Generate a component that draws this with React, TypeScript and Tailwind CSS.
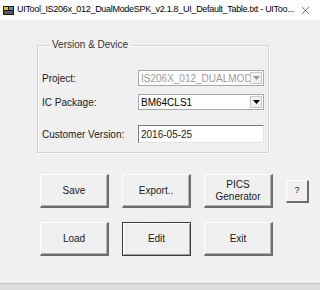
import { X } from 'lucide-react';

function WinButton({ children, isDefault = false }: { children: React.ReactNode; isDefault?: boolean }) {
  return (
    <div
      className={
        'w-[69px] h-[34px] flex items-center justify-center text-center leading-[12px] bg-[#f0f0f0] ' +
        (isDefault
          ? 'border border-[#3c3c3c] shadow-[inset_1px_1px_0_#ffffff,inset_-1px_-1px_0_#a0a0a0]'
          : 'border-t border-l border-t-[#ffffff] border-l-[#ffffff] border-r-2 border-b-2 border-r-[#6d6d6d] border-b-[#6d6d6d] shadow-[inset_-1px_-1px_0_#b4b4b4]')
      }
    >
      {children}
    </div>
  );
}

function Combo({ value, disabled = false }: { value: string; disabled?: boolean }) {
  return (
    <div className="w-[126px] h-[16px] flex items-center bg-white border border-[#a9a9a9] overflow-hidden">
      <span className={'flex-1 pl-[2px] whitespace-nowrap overflow-hidden ' + (disabled ? 'text-[#9a9a9a]' : 'text-black')}>
        {value}
      </span>
      <div className="w-[12px] h-[12px] mr-[1px] flex items-center justify-center bg-[#f0f0f0] border border-[#c8c8c8]">
        <svg width="7" height="4" viewBox="0 0 7 4">
          <path d="M0 0h7L3.5 4z" fill={disabled ? '#9a9a9a' : '#000'} />
        </svg>
      </div>
    </div>
  );
}

export default function App() {
  return (
    <div className="w-[320px] h-[290px] flex flex-col bg-[#f0f0f0] text-[10px] text-[#1a1a1a] font-['Liberation_Sans',Arial,sans-serif] overflow-hidden">
      {/* Title bar */}
      <div className="h-[20px] bg-white flex items-center pl-[3px] pr-[8px]">
        <svg width="11" height="9" viewBox="0 0 11 9" className="shrink-0">
          <rect x="0" y="0" width="11" height="9" fill="#1c1c1c" />
          <rect x="1" y="1" width="4" height="3" fill="#e8c020" />
          <rect x="6" y="1" width="4" height="3" fill="#4a8ad0" />
          <rect x="1" y="5" width="9" height="3" fill="#5a5a5a" />
        </svg>
        <span className="ml-[3px] flex-1 whitespace-nowrap overflow-hidden text-[9px] tracking-[-0.3px] text-black">
          UITool_IS206x_012_DualModeSPK_v2.1.8_UI_Default_Table.txt - UIToo...
        </span>
        <X size={13} strokeWidth={1} className="text-black shrink-0" />
      </div>

      {/* Body */}
      <div className="flex-1 pl-[37px] pt-[19px]">
        <fieldset className="w-[231px] h-[114px] border border-[#d5d5d5] shadow-[inset_1px_1px_0_#ffffff,1px_1px_0_#ffffff] px-[4px]">
          <legend className="ml-[8px] px-[2px] leading-[12px] text-[#333]">Version &amp; Device</legend>
          <div className="flex items-center mt-[19px] h-[16px]">
            <span className="w-[96px]">Project:</span>
            <Combo value="IS206X_012_DUALMODE_" disabled />
          </div>
          <div className="flex items-center mt-[8px] h-[16px]">
            <span className="w-[96px]">IC Package:</span>
            <Combo value="BM64CLS1" />
          </div>
          <div className="flex items-center mt-[15px] h-[18px]">
            <span className="w-[96px]">Customer Version:</span>
            <div className="w-[126px] h-[18px] flex items-center pl-[2px] bg-white border-t border-l border-[#7a7a7a] border-r border-b border-r-[#e3e3e3] border-b-[#e3e3e3]">
              2016-05-25
            </div>
          </div>
        </fieldset>

        <div className="ml-[3px] mt-[21px] flex flex-col gap-[14px]">
          <div className="flex items-center gap-[13px]">
            <WinButton>Save</WinButton>
            <WinButton>Export..</WinButton>
            <WinButton>
              PICS
              <br />
              Generator
            </WinButton>
            <div className="w-[23px] h-[23px] flex items-center justify-center bg-[#f0f0f0] border-t border-l border-[#ffffff] border-r-2 border-b-2 border-r-[#6d6d6d] border-b-[#6d6d6d] text-[9px]">
              ?
            </div>
          </div>
          <div className="flex items-center gap-[13px]">
            <WinButton>Load</WinButton>
            <WinButton isDefault>Edit</WinButton>
            <WinButton>Exit</WinButton>
          </div>
        </div>
      </div>

      {/* Taskbar strip */}
      <div className="h-[7px] bg-[#dcdcdc] border-t border-[#c4c4c4]" />
    </div>
  );
}
